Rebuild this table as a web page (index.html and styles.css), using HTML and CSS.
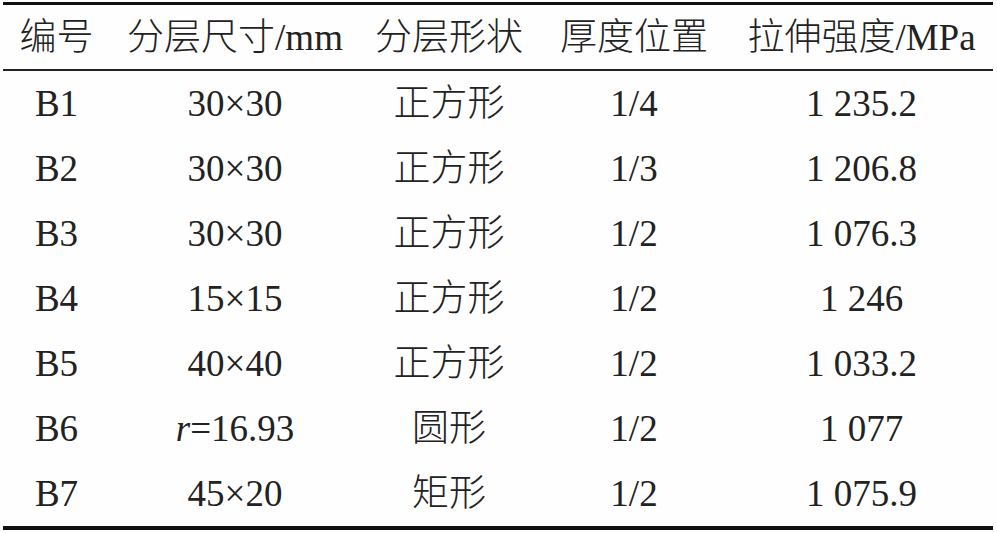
FILE: index.html
```html
<!DOCTYPE html>
<html lang="zh">
<head>
<meta charset="utf-8">
<link rel="stylesheet" href="styles.css">
<title>表</title>
</head>
<body>
<div class="wrap">
<table class="data">
<colgroup>
<col class="c1"><col class="c2"><col class="c3"><col class="c4"><col class="c5">
</colgroup>
<thead>
<tr><th>编号</th><th>分层尺寸/mm</th><th>分层形状</th><th>厚度位置</th><th>拉伸强度/MPa</th></tr>
</thead>
<tbody>
<tr><td>B1</td><td>30×30</td><td>正方形</td><td>1/4</td><td>1 235.2</td></tr>
<tr><td>B2</td><td>30×30</td><td>正方形</td><td>1/3</td><td>1 206.8</td></tr>
<tr><td>B3</td><td>30×30</td><td>正方形</td><td>1/2</td><td>1 076.3</td></tr>
<tr><td>B4</td><td>15×15</td><td>正方形</td><td>1/2</td><td>1 246</td></tr>
<tr><td>B5</td><td>40×40</td><td>正方形</td><td>1/2</td><td>1 033.2</td></tr>
<tr><td>B6</td><td><i>r</i>=16.93</td><td>圆形</td><td>1/2</td><td>1 077</td></tr>
<tr><td>B7</td><td>45×20</td><td>矩形</td><td>1/2</td><td>1 075.9</td></tr>
</tbody>
</table>
</div>
</body>
</html>
```

FILE: styles.css
```css
html, body {
  margin: 0;
  padding: 0;
  background: #fefefe;
}
.wrap {
  padding: 2px 4px 0 3px;
}
.data {
  width: 990px;
  border-collapse: collapse;
  table-layout: fixed;
  font-family: "Liberation Serif", "Noto Sans CJK SC", serif;
  font-size: 37px;
  font-weight: 300;
  color: #222;
  border-top: 3px solid #111;
  border-bottom: 4px solid #111;
}
.c1 { width: 107px; }
.c2 { width: 250px; }
.c3 { width: 178px; }
.c4 { width: 192px; }
.c5 { width: 263px; }
.data th, .data td {
  padding: 0;
  text-align: center;
  font-weight: 300;
  white-space: nowrap;
  line-height: 1;
}
.data thead th {
  height: 64px;
  border-bottom: 2px solid #222;
}
.data tbody td {
  height: 65px;
}
.data i {
  font-style: italic;
}
```
